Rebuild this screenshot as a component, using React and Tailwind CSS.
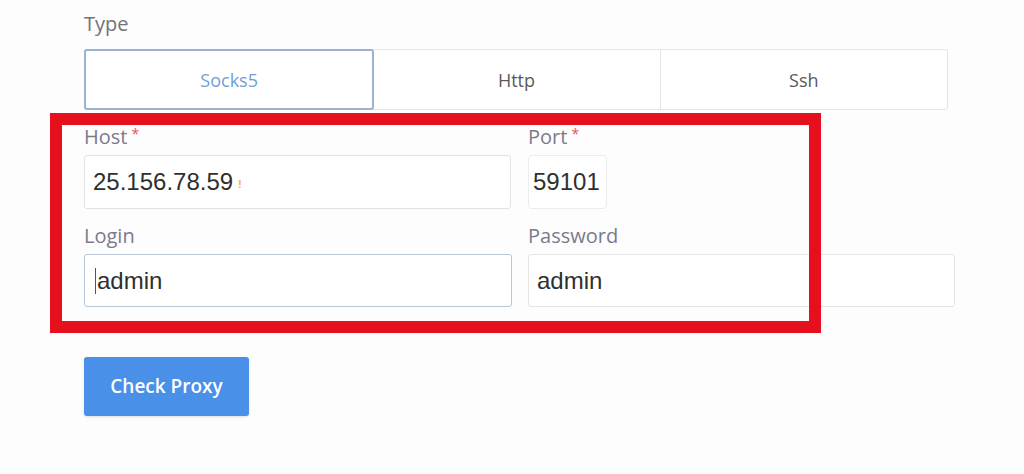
import React from 'react';

const label = "block text-[20px] leading-none text-[#7b7a8c] [font-family:'Open_Sans',sans-serif]";
const value = "text-[24px] text-[#2f2f2f] [font-family:'Liberation_Sans',Arial,sans-serif]";

const Field = ({ title, required, children, className = '' }) => (
  <div className={`flex flex-col ${className}`}>
    <span className={label}>
      {title}
      {required && <span className="ml-1 align-top text-[14px] text-[#ef4f5a]">*</span>}
    </span>
    {children}
  </div>
);

export default function App() {
  const tabs = ['Socks5', 'Http', 'Ssh'];

  return (
    <div className="relative h-[474px] w-[1024px] overflow-hidden bg-[#fdfdfd] [font-family:'Open_Sans',sans-serif]">
      <div className="flex flex-col pl-[84px] pt-[13px]">
        <span className="text-[20px] leading-[22px] text-[#72727a]">Type</span>

        {/* Type tabs */}
        <div className="mt-[14px] flex h-[61px] w-[864px] rounded-[3px] border border-[#e4e4e4] bg-white">
          {tabs.map((t, i) => (
            <div
              key={t}
              className={`flex flex-1 items-center justify-center pt-[2px] text-[18px] ${
                i === 0
                  ? '-m-px rounded-[3px] border-2 border-[#9bb3d0] text-[#6e9fd6]'
                  : 'border-l border-[#e4e4e4] text-[#595959]'
              } ${i === 1 ? 'border-l-0' : ''}`}
            >
              {t}
            </div>
          ))}
        </div>

        {/* Host / Port */}
        <div className="mt-[17px] flex gap-[17px]">
          <Field title="Host" required className="w-[427px]">
            <div className="mt-[8px] flex h-[54px] items-center rounded-[3px] border border-[#e2e2e2] bg-white px-[8px]">
              <span className={value}>25.156.78.59</span>
              <span className="ml-[5px] mt-[4px] text-[11px] font-bold text-[#f0b45a]">!</span>
            </div>
          </Field>
          <Field title="Port" required>
            <div className="mt-[8px] flex h-[54px] w-[79px] items-center rounded-[4px] border border-[#ececec] bg-white px-[4px]">
              <span className={value}>59101</span>
            </div>
          </Field>
        </div>

        {/* Login / Password */}
        <div className="mt-[17px] flex gap-[16px]">
          <Field title="Login" className="w-[428px]">
            <div className="mt-[8px] flex h-[53px] items-center rounded-[3px] border border-[#b9c6d8] bg-white px-[10px]">
              <span className="mr-[1px] h-[26px] w-px bg-[#555]" />
              <span className={value}>admin</span>
            </div>
          </Field>
          <Field title="Password" className="w-[427px]">
            <div className="mt-[8px] flex h-[53px] items-center rounded-[3px] border border-[#e4e4e4] bg-white px-[8px]">
              <span className={value}>admin</span>
            </div>
          </Field>
        </div>

        <button className="mt-[50px] h-[59px] w-[165px] rounded-[3px] bg-[#4a8fe8] text-[19px] font-semibold text-white shadow-sm">
          Check Proxy
        </button>
      </div>

      {/* red annotation frame */}
      <div className="pointer-events-none absolute left-[50px] top-[113px] h-[220px] w-[771px] border-[12px] border-[#e5101b]" />
    </div>
  );
}
